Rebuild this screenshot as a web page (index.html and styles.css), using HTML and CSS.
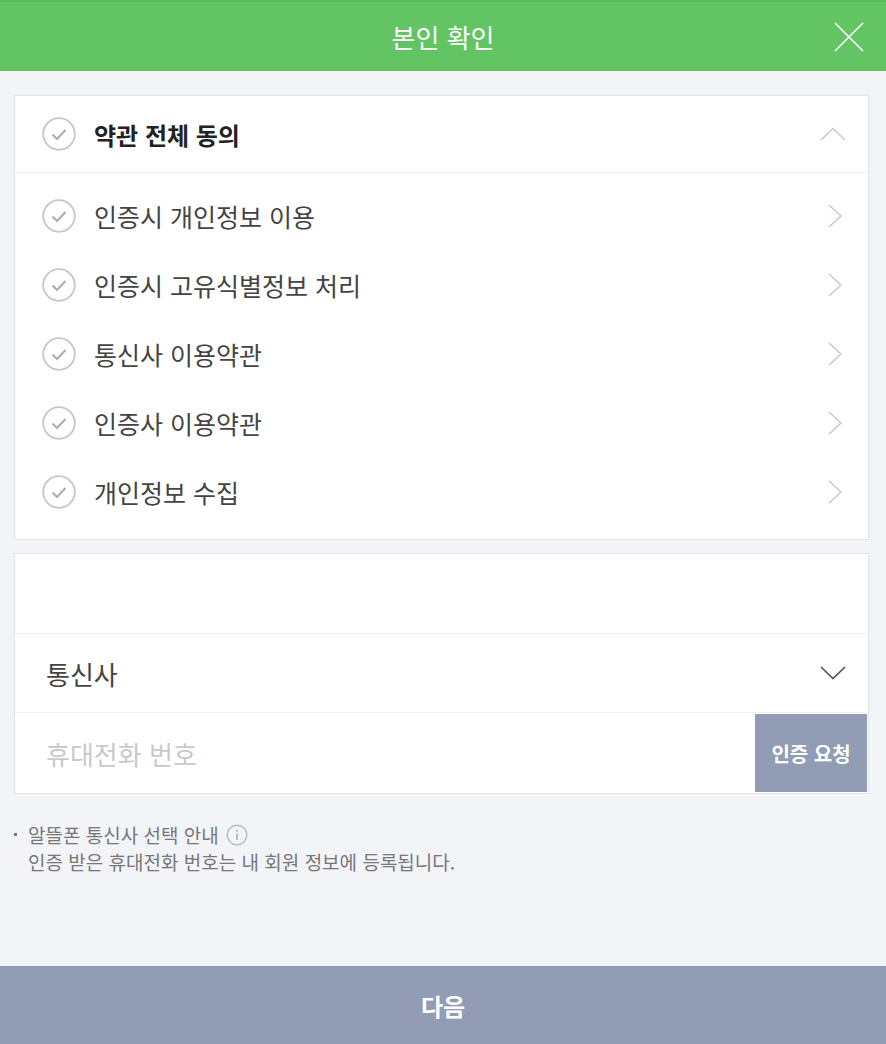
FILE: index.html
```html
<!DOCTYPE html>
<html lang="ko">
<head>
  <meta charset="UTF-8">
  <meta name="viewport" content="width=device-width, initial-scale=1.0">
  <title>본인 확인</title>
  <link rel="stylesheet" href="styles.css">
</head>
<body>
  <header class="top">
    <h1>본인 확인</h1>
    <button class="close" aria-label="닫기">
      <svg width="30" height="30" viewBox="0 0 30 30"><path d="M1 1 L29 29 M29 1 L1 29" stroke="#fff" stroke-width="1.6" fill="none"/></svg>
    </button>
  </header>

  <main class="content">
    <section class="card terms">
      <div class="all_row">
        <svg class="check" width="34" height="34" viewBox="0 0 34 34"><circle cx="17" cy="17" r="15.8" fill="#fff" stroke="#c3c6d1" stroke-width="1.8"/><path d="M10.5 17.5 L15 22 L23.5 13" fill="none" stroke="#a9acb6" stroke-width="2"/></svg>
        <strong>약관 전체 동의</strong>
        <svg class="arrow_up" width="26" height="14" viewBox="0 0 26 14"><path d="M1 13 L13 1.500 L25 13" fill="none" stroke="#c8c8c8" stroke-width="1.500"/></svg>
      </div>
      <ul class="term_list">
        <li>
          <svg class="check" width="34" height="34" viewBox="0 0 34 34"><circle cx="17" cy="17" r="15.800" fill="#fff" stroke="#c3c6d1" stroke-width="1.800"/><path d="M10.500 17.500 L15 22 L23.500 13" fill="none" stroke="#a9acb6" stroke-width="2"/></svg>
          <span>인증시 개인정보 이용</span>
          <svg class="arrow_right" width="14" height="24" viewBox="0 0 14 24"><path d="M1 1 L13 12 L1 23" fill="none" stroke="#c8c8c8" stroke-width="1.500"/></svg>
        </li>
        <li>
          <svg class="check" width="34" height="34" viewBox="0 0 34 34"><circle cx="17" cy="17" r="15.800" fill="#fff" stroke="#c3c6d1" stroke-width="1.800"/><path d="M10.500 17.500 L15 22 L23.500 13" fill="none" stroke="#a9acb6" stroke-width="2"/></svg>
          <span>인증시 고유식별정보 처리</span>
          <svg class="arrow_right" width="14" height="24" viewBox="0 0 14 24"><path d="M1 1 L13 12 L1 23" fill="none" stroke="#c8c8c8" stroke-width="1.500"/></svg>
        </li>
        <li>
          <svg class="check" width="34" height="34" viewBox="0 0 34 34"><circle cx="17" cy="17" r="15.800" fill="#fff" stroke="#c3c6d1" stroke-width="1.800"/><path d="M10.500 17.500 L15 22 L23.500 13" fill="none" stroke="#a9acb6" stroke-width="2"/></svg>
          <span>통신사 이용약관</span>
          <svg class="arrow_right" width="14" height="24" viewBox="0 0 14 24"><path d="M1 1 L13 12 L1 23" fill="none" stroke="#c8c8c8" stroke-width="1.500"/></svg>
        </li>
        <li>
          <svg class="check" width="34" height="34" viewBox="0 0 34 34"><circle cx="17" cy="17" r="15.800" fill="#fff" stroke="#c3c6d1" stroke-width="1.800"/><path d="M10.500 17.500 L15 22 L23.500 13" fill="none" stroke="#a9acb6" stroke-width="2"/></svg>
          <span>인증사 이용약관</span>
          <svg class="arrow_right" width="14" height="24" viewBox="0 0 14 24"><path d="M1 1 L13 12 L1 23" fill="none" stroke="#c8c8c8" stroke-width="1.500"/></svg>
        </li>
        <li>
          <svg class="check" width="34" height="34" viewBox="0 0 34 34"><circle cx="17" cy="17" r="15.800" fill="#fff" stroke="#c3c6d1" stroke-width="1.800"/><path d="M10.500 17.500 L15 22 L23.500 13" fill="none" stroke="#a9acb6" stroke-width="2"/></svg>
          <span>개인정보 수집</span>
          <svg class="arrow_right" width="14" height="24" viewBox="0 0 14 24"><path d="M1 1 L13 12 L1 23" fill="none" stroke="#c8c8c8" stroke-width="1.500"/></svg>
        </li>
      </ul>
    </section>

    <section class="card form">
      <div class="blank_row"></div>
      <div class="carrier_row">
        <span>통신사</span>
        <svg width="26" height="14" viewBox="0 0 26 14"><path d="M1 1 L13 12.500 L25 1" fill="none" stroke="#555" stroke-width="1.700"/></svg>
      </div>
      <div class="phone_row">
        <span class="placeholder">휴대전화 번호</span>
        <button class="request">인증 요청</button>
      </div>
    </section>

    <div class="notice">
      <p class="mvno">알뜰폰 통신사 선택 안내
        <svg width="22" height="22" viewBox="0 0 22 22"><circle cx="11" cy="11" r="9.800" fill="none" stroke="#b9bcc8" stroke-width="1.500"/><path d="M11 9.500 V16 M11 6 V7.800" stroke="#a9acb8" stroke-width="1.500" fill="none"/></svg>
      </p>
      <p>인증 받은 휴대전화 번호는 내 회원 정보에 등록됩니다.</p>
    </div>
  </main>

  <button class="next">다음</button>
</body>
</html>
```

FILE: styles.css
```css
html,body{ width:100%; height:100%; }
body,h1,ul,p,button{ margin:0; padding:0; }
ul{ list-style:none; }
button{ border:0; cursor:pointer; font-family:inherit; }
body{
  background:#f2f4f8; display:flex; flex-direction:column; overflow:hidden;
  font-family:"Noto Sans CJK KR","Noto Sans",sans-serif; color:#444;
}

/* header */
.top{
  height:72px; box-sizing:border-box; flex:none; position:relative;
  background:#63c464; border-top:2px solid #5ab95b; border-bottom:1px solid #fff;
  display:flex; justify-content:center; align-items:center;
}
.top>h1{ font-size:26px; font-weight:400; color:#fff; line-height:1; }
.close{ position:absolute; right:22px; top:20px; width:30px; height:30px; background:transparent; }
.close>svg{ display:block; }

/* cards */
.content{ flex:1; padding:23px 17px 0 14px; display:flex; flex-direction:column; gap:13px; }
.card{ background:#fff; border:1px solid #e1e3ea; }
.all_row{
  height:76px; padding:0 22px 0 27px; display:flex; align-items:center;
  border-bottom:1px solid #f0f0f2;
}
.all_row>strong{ font-size:24px; font-weight:700; color:#222; margin-left:18px; }
.arrow_up{ margin-left:auto; }
.term_list{ padding:8px 26px 13px 27px; }
.term_list>li{ height:69px; display:flex; align-items:center; }
.term_list>li>span{ font-size:25px; margin-left:18px; }
.arrow_right{ margin-left:auto; }

.blank_row{ height:79px; border-bottom:1px solid #f0f0f2; }
.carrier_row{
  height:78px; padding:0 22px 0 31px; display:flex; justify-content:space-between; align-items:center;
  border-bottom:1px solid #f0f0f2; font-size:26px;
}
.phone_row{ height:80px; padding:1px 1px 1px 31px; box-sizing:border-box; display:flex; justify-content:space-between; align-items:center; }
.placeholder{ font-size:26px; color:#c9c9c9; }
.request{
  width:112px; height:78px; background:#929db5; color:#fff; font-size:20px; font-weight:700;
}

/* notice */
.notice{ margin-top:14px; padding-left:14px; font-size:19px; line-height:27px; color:#777; }
.mvno{ position:relative; display:flex; align-items:center; gap:7px; }
.mvno::before{
  content:""; position:absolute; left:-14px; top:12px; width:3px; height:3px; background:#777;
}

.next{
  flex:none; height:78px; background:#929db5; color:#fff; font-size:24px; font-weight:700; width:100%;
}
```
